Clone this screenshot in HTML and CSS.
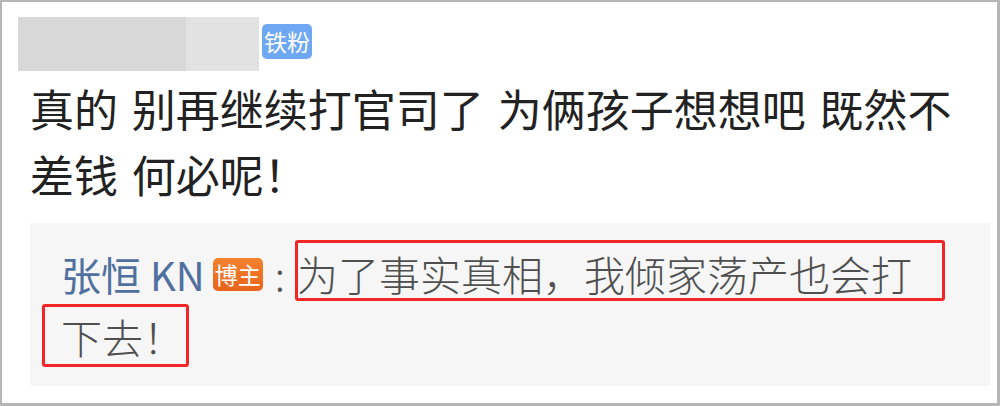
FILE: index.html
```html
<!DOCTYPE html>
<html lang="zh-CN">
<head>
<meta charset="utf-8">
<title>评论</title>
<link rel="stylesheet" href="styles.css">
</head>
<body>
<div class="card">
  <div class="header">
    <div class="name-mask">
      <span class="mask-a"></span><span class="mask-b"></span>
    </div>
    <span class="badge badge-fan">铁粉</span>
  </div>
  <p class="comment">真的 别再继续打官司了 为俩孩子想想吧 既然不差钱 何必呢！</p>
  <div class="reply">
    <p class="reply-text"><span class="reply-name">张恒 KN</span><span class="badge badge-host">博主</span><span class="colon">:</span>为了事实真相，我倾家荡产也会打下去！</p>
    <span class="mark mark-1"></span>
    <span class="mark mark-2"></span>
  </div>
</div>
</body>
</html>
```

FILE: styles.css
```css
html, body {
  margin: 0;
  padding: 0;
  background: #ffffff;
}

body {
  font-family: "Noto Sans CJK SC", "Noto Sans", sans-serif;
}

.card {
  box-sizing: border-box;
  width: 1000px;
  height: 406px;
  border-style: solid;
  border-color: #b6b6b6;
  border-width: 2px 3px 3px 2px;
  padding: 15px 7px 0 16px;
  background: #ffffff;
}

.header {
  display: flex;
  align-items: center;
  height: 54px;
}

.name-mask {
  display: flex;
  height: 54px;
}

.mask-a {
  width: 168px;
  background: #d8d8d8;
}

.mask-b {
  width: 73px;
  background: #e2e2e2;
}

.badge {
  display: inline-flex;
  align-items: center;
  justify-content: center;
  width: 50px;
  color: #ffffff;
  font-size: 23px;
  font-weight: 400;
  line-height: 1;
  border-radius: 5px;
}

.badge-fan {
  height: 35px;
  margin-left: 3px;
  margin-top: -5px;
  background: #6ea8f2;
}

.comment {
  margin: 4px 0 0 12px;
  width: 944px;
  font-size: 44px;
  font-weight: 400;
  line-height: 66px;
  color: #222222;
  word-spacing: 4px;
}

.reply {
  position: relative;
  box-sizing: border-box;
  width: 960px;
  margin: 16px 0 0 12px;
  padding: 19px 55px 19px 31px;
  background: #f6f6f6;
}

.reply-text {
  margin: 0;
  font-size: 41px;
  font-weight: 300;
  line-height: 62px;
  color: #4f4f4f;
}

.reply-name {
  font-size: 40px;
  font-weight: 400;
  color: #50709f;
}

.badge-host {
  height: 33px;
  margin-left: 8px;
  vertical-align: 7px;
  background: linear-gradient(180deg, #f5822f 0%, #e8631c 100%);
}

.colon {
  display: inline-block;
  margin: 0 12px 0 12px;
  color: #555555;
}

.mark {
  position: absolute;
  box-sizing: border-box;
  border: 3px solid #f22626;
  border-radius: 3px;
}

.mark-1 {
  left: 265px;
  top: 17px;
  width: 650px;
  height: 61px;
}

.mark-2 {
  left: 12px;
  top: 81px;
  width: 147px;
  height: 63px;
}
```
